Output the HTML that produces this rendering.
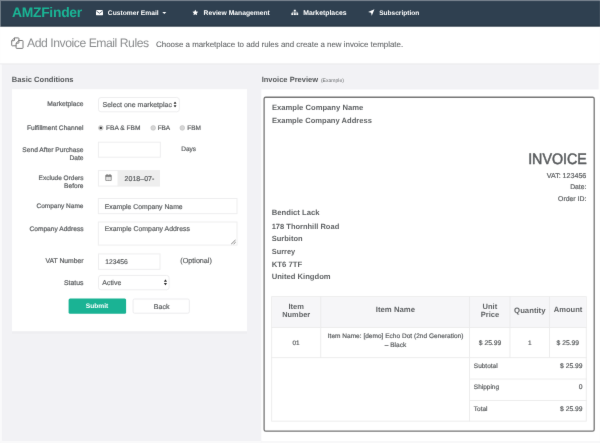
<!DOCTYPE html>
<html><head><meta charset="utf-8">
<style>
*{margin:0;padding:0}
html,body{width:600px;height:443px;overflow:hidden;background:#f2f2f5}
svg#root{position:absolute;left:0;top:0;display:block;font-family:"Liberation Sans",sans-serif}
svg#root text{white-space:pre;text-rendering:geometricPrecision}
</style></head><body>
<svg id="root" width="600" height="443" viewBox="0 0 600 443">
<defs><filter id="bl" x="0" y="0" width="100%" height="100%" color-interpolation-filters="sRGB"><feConvolveMatrix order="3" kernelMatrix="0.0035 0.0521 0.0035 0.0521 0.7778 0.0521 0.0035 0.0521 0.0035" edgeMode="duplicate" preserveAlpha="true"/></filter></defs>
<rect x="-10" y="-10" width="620" height="463" fill="#f2f2f5"/>
<g filter="url(#bl)">
<rect x="-10" y="-10" width="620" height="463" fill="#f2f2f5"/>
<rect x="0" y="0" width="600" height="443" fill="#f2f2f5"/>
<rect x="0" y="0" width="600" height="26.75" fill="#2f4050"/>
<rect x="0" y="24.9" width="600" height="1.85" fill="#2a3947"/>
<rect x="0" y="0" width="600" height="1.1" fill="#6d7985"/>
<rect x="0" y="0" width="1" height="26.75" fill="#65727e"/>
<text transform="matrix(1 0.00003 0 1 11.9 17.38)" font-size="13.9" font-weight="bold" fill="#1ab394" letter-spacing="-0.28">AMZFinder</text>
<svg x="96" y="10" width="7" height="5.6" viewBox="0 0 14 11"><rect x="0" y="0" width="14" height="11" rx="1.5" fill="#fff"/><path d="M0.5 1.5 L7 6.5 L13.5 1.5" stroke="#2f4050" stroke-width="1.5" fill="none"/></svg>
<text transform="matrix(1 0.00003 0 1 107.8 15.0)" font-size="6.7" font-weight="bold" fill="#fff">Customer Email</text>
<path d="M162.3 11.9 H166.3 L164.3 14.1 Z" fill="#fff"/>
<svg x="192.3" y="9.5" width="6" height="5.8" viewBox="0 0 20 19.5"><path d="M10 0 L13 6.6 L20 7.4 L14.8 12.2 L16.2 19.3 L10 15.7 L3.8 19.3 L5.2 12.2 L0 7.4 L7 6.6 Z" fill="#fff"/></svg>
<text transform="matrix(1 0.00003 0 1 203.6 15.01)" font-size="6.74" font-weight="bold" fill="#fff">Review Management</text>
<svg x="291.2" y="9.4" width="7.2" height="5.9" viewBox="0 0 18 14"><rect x="6.5" y="0" width="5" height="4.5" fill="#fff"/><rect x="0" y="9" width="5" height="5" fill="#fff"/><rect x="6.5" y="9" width="5" height="5" fill="#fff"/><rect x="13" y="9" width="5" height="5" fill="#fff"/><path d="M9 4 V9 M2.5 9 V6.7 H15.5 V9" stroke="#fff" stroke-width="1.3" fill="none"/></svg>
<text transform="matrix(1 0.00003 0 1 303.2 15.05)" font-size="6.85" font-weight="bold" fill="#fff">Marketplaces</text>
<svg x="367.7" y="9.1" width="7.2" height="6.8" viewBox="0 0 16 16"><path d="M15.5 0.5 L0.5 7 L7.5 8.5 L9 15.5 Z" fill="#fff"/></svg>
<text transform="matrix(1 0.00003 0 1 379.2 14.94)" font-size="6.55" font-weight="bold" fill="#fff">Subscription</text>
<rect x="0" y="26.75" width="600" height="36.75" fill="#fff"/>
<rect x="0" y="63.5" width="600" height="1" fill="#ebebee"/>
<g fill="#fff" stroke="#747474" stroke-width="0.95" stroke-linejoin="round"><path d="M14.5 37.9 H18.3 Q18.9 37.9 18.9 38.5 V45.2 Q18.9 45.8 18.3 45.8 H12.3 Q11.7 45.8 11.7 45.2 V40.7 Z"/><path d="M14.5 37.9 V40.1 Q14.5 40.7 13.9 40.7 H11.7" fill="none"/><path d="M18.9 40.5 H22.4 Q23 40.5 23 41.1 V47.8 Q23 48.4 22.4 48.4 H16.7 Q16.1 48.4 16.1 47.8 V43.2 Z"/><path d="M18.9 40.5 V42.6 Q18.9 43.2 18.3 43.2 H16.1" fill="none"/></g>
<text transform="matrix(1 0.00003 0 1 27.1 47.17)" font-size="12.2" fill="#8b8d8f" letter-spacing="-0.46">Add Invoice Email Rules</text>
<text transform="matrix(1 0.00003 0 1 156.1 47.34)" font-size="7.92" fill="#626567" stroke="#626567" stroke-width="0.08">Choose a marketplace to add rules and create a new invoice template.</text>
<rect x="0" y="64.5" width="1.8" height="378.5" fill="#fbfbfc"/>
<rect x="598.7" y="64.5" width="1.3" height="378.5" fill="#fdfdfd"/>
<text transform="matrix(1 0.00003 0 1 11.8 82.31)" font-size="7.57" font-weight="bold" fill="#55585a">Basic Conditions</text>
<rect x="12" y="89.2" width="235" height="242.3" fill="#fff"/>
<rect x="12" y="331.3" width="235" height="2.4" fill="#eeeef1"/>
<text transform="matrix(1 0.00003 0 1 83.5 106.39)" text-anchor="end" font-size="6.68" fill="#5e6163" stroke="#5e6163" stroke-width="0.22">Marketplace</text>
<rect x="98.5" y="97.5" width="80.8" height="14.3" fill="#fff" stroke="#eeeeef" stroke-width="1" rx="2.5"/>
<text transform="matrix(1 0.00003 0 1 102.5 107.11)" font-size="7.02" fill="#585b5d" stroke="#585b5d" stroke-width="0.18">Select one marketplac</text>
<svg x="173.4" y="101.4" width="3.3" height="6.2" viewBox="0 0 6 12"><path d="M3 0 L6 4.7 H0 Z M3 12 L6 7.3 H0 Z" fill="#2e2e2e"/></svg>
<text transform="matrix(1 0.00003 0 1 83.5 130.07)" text-anchor="end" font-size="6.62" fill="#5e6163" stroke="#5e6163" stroke-width="0.22">Fulfillment Channel</text>
<circle cx="100.80000000000001" cy="127.9" r="2.35" fill="#d6d6d6" stroke="#bcbcbc" stroke-width="0.6"/>
<circle cx="100.80000000000001" cy="127.9" r="1.2" fill="#404040"/>
<text transform="matrix(1 0.00003 0 1 106 130.26)" font-size="6.6" fill="#585b5d" stroke="#585b5d" stroke-width="0.18">FBA &amp; FBM</text>
<circle cx="153.20000000000002" cy="127.9" r="2.35" fill="#d6d6d6" stroke="#bcbcbc" stroke-width="0.6"/>
<text transform="matrix(1 0.00003 0 1 157.8 130.23)" font-size="6.5" fill="#585b5d" stroke="#585b5d" stroke-width="0.18" letter-spacing="-0.2">FBA</text>
<circle cx="182.3" cy="127.9" r="2.35" fill="#d6d6d6" stroke="#bcbcbc" stroke-width="0.6"/>
<text transform="matrix(1 0.00003 0 1 187.3 130.23)" font-size="6.5" fill="#585b5d" stroke="#585b5d" stroke-width="0.18" letter-spacing="-0.1">FBM</text>
<text transform="matrix(1 0.00003 0 1 83.5 151.99)" text-anchor="end" font-size="6.68" fill="#5e6163" stroke="#5e6163" stroke-width="0.22">Send After Purchase</text>
<text transform="matrix(1 0.00003 0 1 83.5 160.19)" text-anchor="end" font-size="6.68" fill="#5e6163" stroke="#5e6163" stroke-width="0.22">Date</text>
<rect x="98.4" y="142.2" width="61.9" height="15.0" fill="#fff" stroke="#eeeeef" stroke-width="1"/>
<text transform="matrix(1 0.00003 0 1 181.2 151.43)" font-size="6.5" fill="#585b5d" stroke="#585b5d" stroke-width="0.18">Days</text>
<text transform="matrix(1 0.00003 0 1 83.5 180.14)" text-anchor="end" font-size="6.53" fill="#5e6163" stroke="#5e6163" stroke-width="0.22">Exclude Orders</text>
<text transform="matrix(1 0.00003 0 1 83.5 188.26)" text-anchor="end" font-size="6.6" fill="#5e6163" stroke="#5e6163" stroke-width="0.22">Before</text>
<rect x="118" y="170.1" width="42" height="16.5" fill="#eee"/>
<rect x="98.4" y="170.6" width="19.6" height="15.5" fill="#fff" stroke="#eeeeef" stroke-width="1"/>
<svg x="105.2" y="174" width="6.6" height="7" viewBox="0 0 13 14"><rect x="0.8" y="2.4" width="11.4" height="10.8" rx="1" fill="#d4d4d4" stroke="#777" stroke-width="1.6"/><rect x="0.8" y="2.4" width="11.4" height="3.2" fill="#777"/><path d="M3.6 0.3 V3.4 M9.4 0.3 V3.4" stroke="#777" stroke-width="1.7"/><path d="M4.4 5.6 V13 M8.6 5.6 V13 M1 8 H12 M1 10.6 H12" stroke="#f4f4f4" stroke-width="0.7"/></svg>
<text transform="matrix(1 0.00003 0 1 124.6 181.02)" font-size="7.05" fill="#585b5d" stroke="#585b5d" stroke-width="0.18">2018–07-</text>
<text transform="matrix(1 0.00003 0 1 83.5 207.54)" text-anchor="end" font-size="6.53" fill="#5e6163" stroke="#5e6163" stroke-width="0.22">Company Name</text>
<rect x="98.3" y="198.5" width="138.7" height="15.2" fill="#fff" stroke="#eeeeef" stroke-width="1"/>
<text transform="matrix(1 0.00003 0 1 104.7 208.55)" font-size="6.85" fill="#585b5d" stroke="#585b5d" stroke-width="0.18">Example Company Name</text>
<text transform="matrix(1 0.00003 0 1 83.5 231.27)" text-anchor="end" font-size="6.61" fill="#5e6163" stroke="#5e6163" stroke-width="0.22">Company Address</text>
<rect x="98.3" y="222.0" width="138.7" height="23.1" fill="#fff" stroke="#eeeeef" stroke-width="1"/>
<text transform="matrix(1 0.00003 0 1 104.7 231.17)" font-size="6.91" fill="#585b5d" stroke="#585b5d" stroke-width="0.18">Example Company Address</text>
<svg x="230.8" y="239.4" width="5.2" height="5.2" viewBox="0 0 10 10"><path d="M9.5 0.5 L0.5 9.5 M9.5 5 L5 9.5" stroke="#555" stroke-width="1.4"/></svg>
<text transform="matrix(1 0.00003 0 1 83.5 263.23)" text-anchor="end" font-size="6.79" fill="#5e6163" stroke="#5e6163" stroke-width="0.22">VAT Number</text>
<rect x="98.5" y="253.9" width="61.5" height="15.4" fill="#fff" stroke="#eeeeef" stroke-width="1"/>
<text transform="matrix(1 0.00003 0 1 105.3 264.01)" font-size="6.74" fill="#585b5d" stroke="#585b5d" stroke-width="0.18">123456</text>
<text transform="matrix(1 0.00003 0 1 180.3 263.18)" font-size="7.2" fill="#585b5d" stroke="#585b5d" stroke-width="0.18">(Optional)</text>
<text transform="matrix(1 0.00003 0 1 83.5 284.96)" text-anchor="end" font-size="6.88" fill="#5e6163" stroke="#5e6163" stroke-width="0.22">Status</text>
<rect x="98.5" y="275.4" width="70.6" height="14.4" fill="#fff" stroke="#eeeeef" stroke-width="1" rx="2.5"/>
<text transform="matrix(1 0.00003 0 1 102.3 285.0)" font-size="6.98" fill="#585b5d" stroke="#585b5d" stroke-width="0.18">Active</text>
<svg x="163.8" y="279.2" width="3.3" height="6.2" viewBox="0 0 6 12"><path d="M3 0 L6 4.7 H0 Z M3 12 L6 7.3 H0 Z" fill="#2e2e2e"/></svg>
<rect x="68.6" y="298.5" width="57.5" height="15.2" fill="#1ab394" rx="1.5"/>
<text transform="matrix(1 0.00003 0 1 85.8 308.38)" font-size="6.64" font-weight="bold" fill="#fff">Submit</text>
<rect x="133.1" y="299.0" width="56.2" height="14.2" fill="#fff" stroke="#ececee" stroke-width="1" rx="1.5"/>
<text transform="matrix(1 0.00003 0 1 153.8 308.51)" font-size="7.02" fill="#585b5d" stroke="#585b5d" stroke-width="0.18">Back</text>
<text transform="matrix(1 0.00003 0 1 261.7 82.19)" font-size="7.5" font-weight="bold" fill="#55585a">Invoice Preview</text>
<text transform="matrix(1 0.00003 0 1 320.9 82.31)" font-size="5.05" fill="#6a6d6f">(Example)</text>
<rect x="261.3" y="89.45" width="338.7" height="351.55" fill="#fff"/>
<rect x="264.1" y="97.25" width="330.1" height="333.9" fill="#fff" stroke="#767676" stroke-width="1.3" rx="1.6"/>
<text transform="matrix(1 0.00003 0 1 271.9 110.24)" font-size="7.65" font-weight="bold" fill="#606365">Example Company Name</text>
<text transform="matrix(1 0.00003 0 1 271.9 123.01)" font-size="7.58" font-weight="bold" fill="#606365">Example Company Address</text>
<text transform="matrix(0.945 0.00003 0 1 586.8 164.41)" text-anchor="end" font-size="15.1" fill="#5a5d5f" stroke="#5a5d5f" stroke-width="0.5">INVOICE</text>
<text transform="matrix(1 0.00003 0 1 586.3 177.74)" text-anchor="end" font-size="7.1" fill="#585b5d" stroke="#585b5d" stroke-width="0.18">VAT: 123456</text>
<text transform="matrix(1 0.00003 0 1 586.3 189.33)" text-anchor="end" font-size="6.78" fill="#585b5d" stroke="#585b5d" stroke-width="0.18">Date:</text>
<text transform="matrix(1 0.00003 0 1 586.3 201.16)" text-anchor="end" font-size="6.86" fill="#585b5d" stroke="#585b5d" stroke-width="0.18">Order ID:</text>
<text transform="matrix(1 0.00003 0 1 271.7 215.46)" font-size="7.7" font-weight="bold" fill="#606365">Bendict Lack</text>
<text transform="matrix(1 0.00003 0 1 271.7 228.79)" font-size="7.51" font-weight="bold" fill="#606365">178 Thornhill Road</text>
<text transform="matrix(1 0.00003 0 1 271.7 241.39)" font-size="7.52" font-weight="bold" fill="#606365">Surbiton</text>
<text transform="matrix(1 0.00003 0 1 271.7 254.06)" font-size="7.42" font-weight="bold" fill="#606365">Surrey</text>
<text transform="matrix(1 0.00003 0 1 271.7 266.58)" font-size="7.76" font-weight="bold" fill="#606365">KT6 7TF</text>
<text transform="matrix(1 0.00003 0 1 271.7 279.14)" font-size="7.64" font-weight="bold" fill="#606365">United Kingdom</text>
<rect x="271.65" y="296.65" width="314.6" height="124.5" fill="#fff" stroke="#ebebeb" stroke-width="0.9"/>
<rect x="272" y="297" width="314" height="30.1" fill="#f6f6f8"/>
<rect x="271.2" y="327" width="315.5" height="0.9" fill="#ebebeb"/>
<rect x="271.2" y="357.2" width="315.5" height="0.9" fill="#ebebeb"/>
<rect x="469.8" y="378.6" width="117" height="0.9" fill="#ebebeb"/>
<rect x="469.8" y="400" width="117" height="0.9" fill="#ebebeb"/>
<rect x="320.3" y="296" width="0.9" height="61.5" fill="#ebebeb"/>
<rect x="469.1" y="296.4" width="0.9" height="125" fill="#ebebeb"/>
<rect x="509.5" y="296" width="0.9" height="61.5" fill="#ebebeb"/>
<rect x="549.1" y="296" width="0.9" height="61.5" fill="#ebebeb"/>
<text transform="matrix(1 0.00003 0 1 296.1 308.79)" text-anchor="middle" font-size="7.5" font-weight="bold" fill="#606365">Item</text>
<text transform="matrix(1 0.00003 0 1 296.2 316.94)" text-anchor="middle" font-size="7.38" font-weight="bold" fill="#606365">Number</text>
<text transform="matrix(1 0.00003 0 1 395.4 312.47)" text-anchor="middle" font-size="7.75" font-weight="bold" fill="#606365">Item Name</text>
<text transform="matrix(1 0.00003 0 1 489.9 308.88)" text-anchor="middle" font-size="7.5" font-weight="bold" fill="#606365">Unit</text>
<text transform="matrix(1 0.00003 0 1 489.9 317.01)" text-anchor="middle" font-size="7.56" font-weight="bold" fill="#606365">Price</text>
<text transform="matrix(1 0.00003 0 1 529.8 312.87)" text-anchor="middle" font-size="7.74" font-weight="bold" fill="#606365">Quantity</text>
<text transform="matrix(1 0.00003 0 1 568 312.4)" text-anchor="middle" font-size="7.55" font-weight="bold" fill="#606365">Amount</text>
<text transform="matrix(1 0.00003 0 1 296.1 344.89)" text-anchor="middle" font-size="6.4" fill="#585b5d" stroke="#585b5d" stroke-width="0.18">01</text>
<text transform="matrix(1 0.00003 0 1 395.6 338.34)" text-anchor="middle" font-size="6.55" fill="#585b5d" stroke="#585b5d" stroke-width="0.18">Item Name: [demo] Echo Dot (2nd Generation)</text>
<text transform="matrix(1 0.00003 0 1 395.5 346.93)" text-anchor="middle" font-size="6.5" fill="#585b5d" stroke="#585b5d" stroke-width="0.18">– Black</text>
<text transform="matrix(1 0.00003 0 1 490 345.01)" text-anchor="middle" font-size="6.74" fill="#585b5d" stroke="#585b5d" stroke-width="0.18">$ 25.99</text>
<text transform="matrix(1 0.00003 0 1 529.8 344.93)" text-anchor="middle" font-size="6.5" fill="#585b5d" stroke="#585b5d" stroke-width="0.18">1</text>
<text transform="matrix(1 0.00003 0 1 567.8 345.01)" text-anchor="middle" font-size="6.74" fill="#585b5d" stroke="#585b5d" stroke-width="0.18">$ 25.99</text>
<text transform="matrix(1 0.00003 0 1 473.8 368.33)" font-size="6.51" fill="#585b5d" stroke="#585b5d" stroke-width="0.18">Subtotal</text>
<text transform="matrix(1 0.00003 0 1 582.5 368.41)" text-anchor="end" font-size="6.74" fill="#585b5d" stroke="#585b5d" stroke-width="0.18">$ 25.99</text>
<text transform="matrix(1 0.00003 0 1 473.8 389.13)" font-size="6.51" fill="#585b5d" stroke="#585b5d" stroke-width="0.18">Shipping</text>
<text transform="matrix(1 0.00003 0 1 582.5 389.31)" text-anchor="end" font-size="6.74" fill="#585b5d" stroke="#585b5d" stroke-width="0.18">0</text>
<text transform="matrix(1 0.00003 0 1 473.8 410.73)" font-size="6.51" fill="#585b5d" stroke="#585b5d" stroke-width="0.18">Total</text>
<text transform="matrix(1 0.00003 0 1 582.5 410.81)" text-anchor="end" font-size="6.74" fill="#585b5d" stroke="#585b5d" stroke-width="0.18">$ 25.99</text>
<rect x="0" y="441" width="261.4" height="2" fill="#f9f9fa"/>
<rect x="261.4" y="441" width="338.6" height="2" fill="#f8f8f9"/>
</g></svg></body></html>
